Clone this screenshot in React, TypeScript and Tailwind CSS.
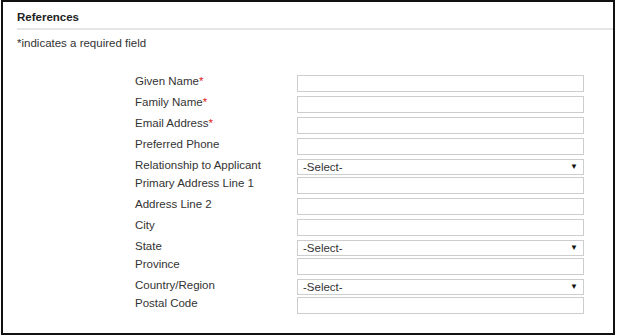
import React from 'react';

type Field = {
  label: string;
  required?: boolean;
  kind: 'text' | 'select';
};

const fields: Field[] = [
  { label: 'Given Name', required: true, kind: 'text' },
  { label: 'Family Name', required: true, kind: 'text' },
  { label: 'Email Address', required: true, kind: 'text' },
  { label: 'Preferred Phone', kind: 'text' },
  { label: 'Relationship to Applicant', kind: 'select' },
  { label: 'Primary Address Line 1', kind: 'text' },
  { label: 'Address Line 2', kind: 'text' },
  { label: 'City', kind: 'text' },
  { label: 'State', kind: 'select' },
  { label: 'Province', kind: 'text' },
  { label: 'Country/Region', kind: 'select' },
  { label: 'Postal Code', kind: 'text' },
];

function SelectBox() {
  return (
    <div className="flex h-[16px] w-[287px] items-center justify-between border border-[#cdcdcd] bg-white pl-[5px] pr-[5px] text-[11.5px] leading-[13px] text-[#333]">
      <span>-Select-</span>
      <span className="text-[8px] leading-none text-[#111]">▼</span>
    </div>
  );
}

function FormRow({ field }: { field: Field }) {
  return (
    <div className={field.kind === 'select' ? 'mb-[2px] flex items-start' : 'mb-[4px] flex items-start'}>
      <label className="w-[162px] shrink-0 text-[11.5px] leading-[13px] text-[#333]">
        {field.label}
        {field.required && <span className="text-[#e02020]">*</span>}
      </label>
      {field.kind === 'select' ? (
        <SelectBox />
      ) : (
        <input
          type="text"
          className="h-[17px] w-[287px] border border-[#cdcdcd] bg-white px-1 text-[11px] outline-none"
        />
      )}
    </div>
  );
}

export default function App() {
  return (
    <div className="h-[336px] w-[617px] bg-white font-['Liberation_Sans',Arial,sans-serif]">
      <div className="ml-[1px] h-[335px] w-[614px] border-2 border-[#111]">
        {/* section header */}
        <div className="pl-[14px] pt-[9px] text-[11.5px] font-bold leading-[13px] text-[#222]">References</div>
        <div className="ml-[14px] mt-[4px] h-[2px] bg-[#e6e6e6]" />

        <div className="mt-[7px] pl-[14px] text-[11.5px] leading-[13px] text-[#333]">*indicates a required field</div>

        {/* form rows */}
        <div className="mt-[25px] pl-[132px]">
          {fields.map((f) => (
            <FormRow key={f.label} field={f} />
          ))}
        </div>
      </div>
    </div>
  );
}
